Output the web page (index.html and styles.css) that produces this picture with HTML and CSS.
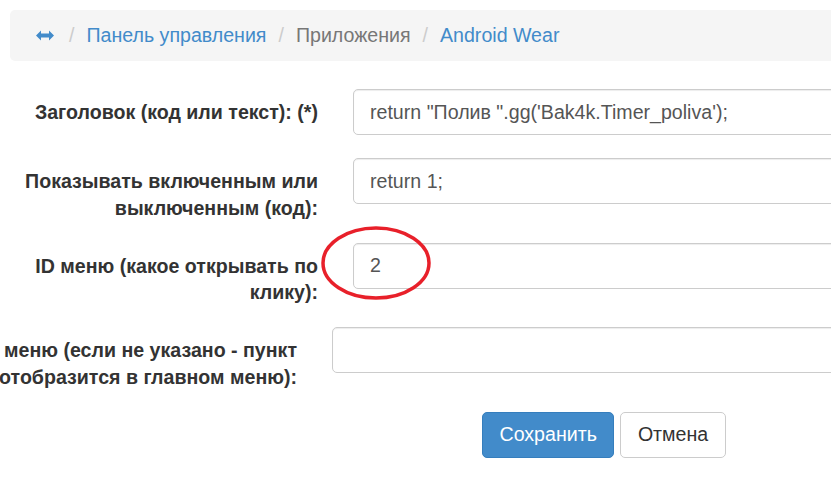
FILE: index.html
```html
<!DOCTYPE html>
<html lang="ru">
<head>
  <meta charset="UTF-8" />
  <title>Android Wear</title>
  <link rel="stylesheet" href="styles.css">
</head>
<body>
  <div class="page">
    <ol class="breadcrumb">
      <li><a href="#" class="home"><svg width="18" height="11" viewBox="0 0 18 11"><path d="M0 5.5 L5 0.5 L5 3.5 L13 3.5 L13 0.5 L18 5.5 L13 10.5 L13 7.5 L5 7.5 L5 10.5 Z" fill="#428bca"/></svg></a></li>
      <li><a href="#">Панель управления</a></li>
      <li class="active">Приложения</li>
      <li><a href="#">Android Wear</a></li>
    </ol>

    <form class="form">
      <div class="form-group first">
        <label class="lbl">Заголовок (код или текст): (*)</label>
        <input class="form-control" type="text" value="return &quot;Полив &quot;.gg('Bak4k.Timer_poliva');">
      </div>
      <div class="form-group">
        <label class="lbl">Показывать включенным или<br>выключенным (код):</label>
        <input class="form-control" type="text" value="return 1;">
      </div>
      <div class="form-group">
        <label class="lbl">ID меню (какое открывать по<br>клику):</label>
        <input class="form-control" type="text" value="2">
        <svg class="mark" width="114" height="78" viewBox="0 0 114 78"><ellipse cx="57" cy="39" rx="53" ry="35" fill="none" stroke="#e8202a" stroke-width="3.5"/></svg>
      </div>
      <div class="form-group narrow">
        <label class="lbl"><span>Родительское меню (если не указано - пункт<br>отобразится в главном меню):</span></label>
        <input class="form-control" type="text" value="">
      </div>
      <div class="actions">
        <button type="button" class="btn btn-primary">Сохранить</button>
        <button type="button" class="btn btn-default">Отмена</button>
      </div>
    </form>
  </div>
</body>
</html>
```

FILE: styles.css
```css
* { margin: 0; padding: 0; box-sizing: border-box; }
html, body { overflow: hidden; }
body { font-family: "Liberation Sans", Arial, sans-serif; font-size: 19.6px; line-height: 26.5px; color: #333; background: #fff; }
a { color: #428bca; text-decoration: none; }
.page { width: 900px; padding: 10px 0 0 0; }

.breadcrumb { list-style: none; display: flex; align-items: center; height: 51px; margin-left: 10px; padding: 0 0 0 26px; background: #f5f5f5; border-radius: 5px; }
.breadcrumb li { display: flex; align-items: center; }
.breadcrumb li + li::before { content: "/"; color: #ccc; padding: 0 12px; }
.breadcrumb .active { color: #777; }
.breadcrumb .home { display: flex; margin-right: 3px; }

.form { margin-top: 28px; }
.form-group { position: relative; display: flex; align-items: flex-start; gap: 35px; margin-bottom: 21.5px; }
.form-group.first { margin-bottom: 23px; }
.lbl { flex: 0 0 318px; min-width: 0; display: flex; justify-content: flex-end; text-align: right; font-weight: bold; padding-top: 10px; white-space: nowrap; }
.narrow .lbl { flex-basis: 297px; }
.form-control { flex: 1; height: 46px; padding: 8px 16px; font: inherit; color: #555; border: 1px solid #ccc; border-radius: 5px; box-shadow: inset 0 1px 1px rgba(0,0,0,.075); }
.mark { position: absolute; left: 319px; top: -19px; }

.actions { display: flex; gap: 6px; padding-left: 482px; }
.btn { height: 46px; padding: 0 16.5px; font: inherit; border: 1px solid #ccc; border-radius: 5px; cursor: pointer; }
.btn-primary { background: #428bca; border-color: #357ebd; color: #fff; }
.btn-default { background: #fff; color: #333; }
```
